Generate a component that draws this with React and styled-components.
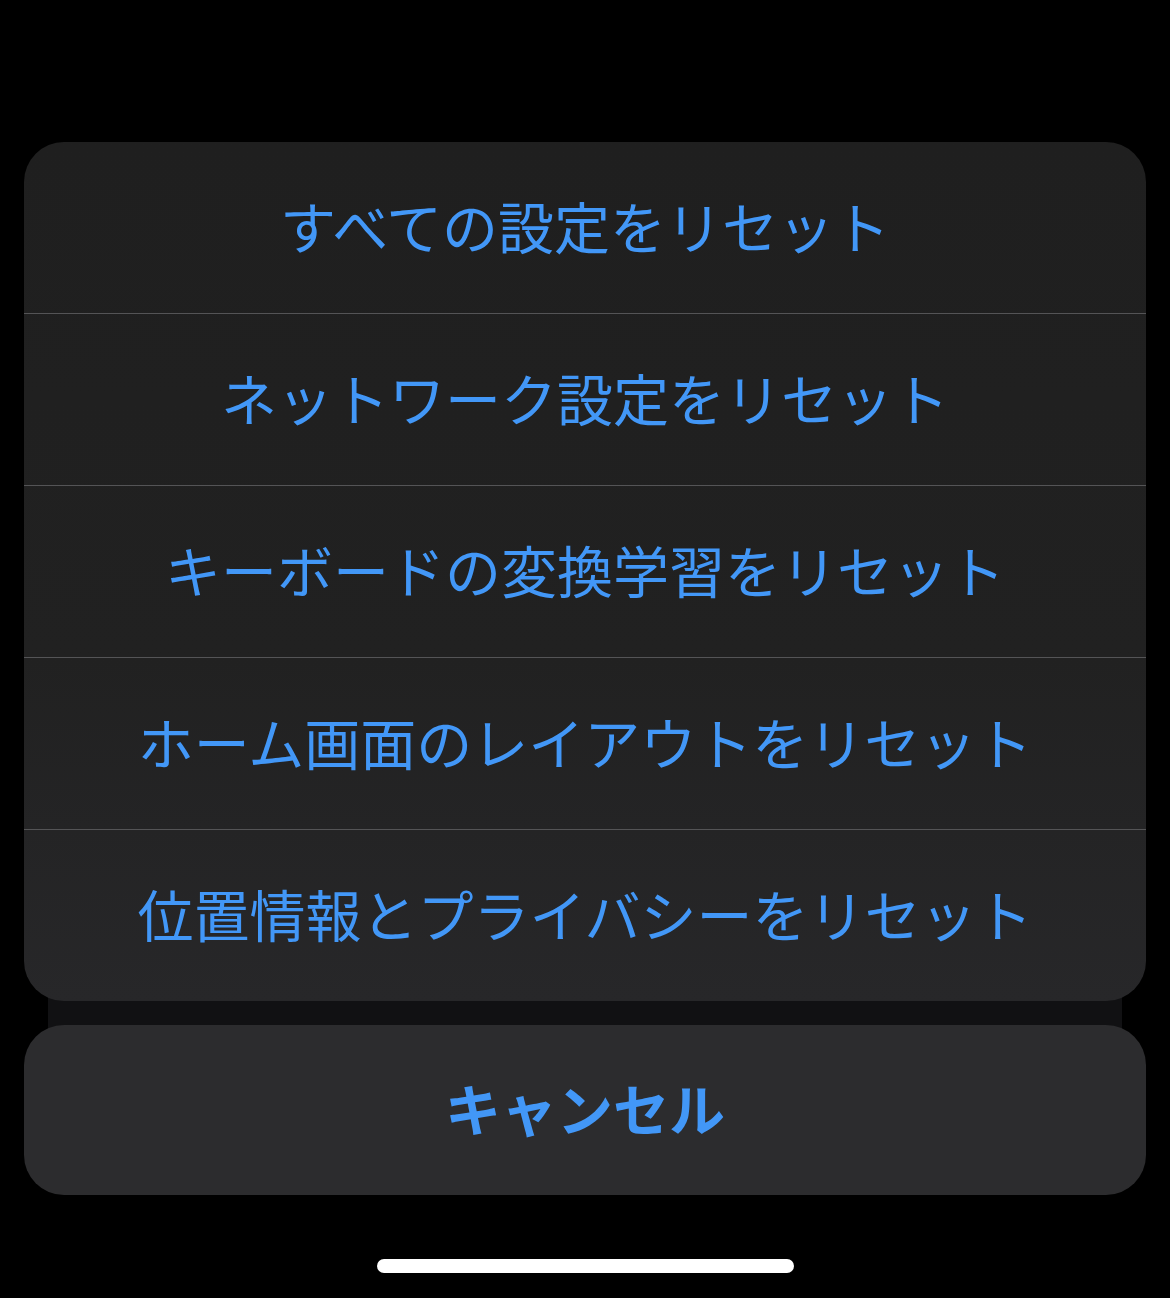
import React from 'react'
import styled, { createGlobalStyle } from 'styled-components'

const GlobalStyle = createGlobalStyle`
  html, body {
    margin: 0;
    padding: 0;
    background: #000;
  }
  body {
    font-family: "Noto Sans CJK JP", "Noto Sans", sans-serif;
  }
`

const Screen = styled.div`
  width: 1170px;
  height: 1298px;
  box-sizing: border-box;
  padding: 142px 24px 0;
  display: flex;
  flex-direction: column;
  background: #000;
`

const Sheet = styled.div`
  position: relative;
  z-index: 2;
  display: flex;
  flex-direction: column;
  border-radius: 40px;
  overflow: hidden;
  background: linear-gradient(180deg, #1f1f1f 0%, #212121 60%, #272729 100%);
`

const Action = styled.div`
  height: 171px;
  box-sizing: content-box;
  padding-bottom: 0;
  display: flex;
  align-items: center;
  justify-content: center;
  color: #4297f7;
  font-size: 56px;
  font-weight: 400;
  line-height: 1;
  border-top: ${p => (p.$first ? 'none' : '1px solid #545456')};
`

const Label = styled.span`
  margin-top: -6px;
`

const Backdrop = styled.div`
  position: relative;
  z-index: 1;
  height: 24px;
  margin: -20px 24px -20px;
  padding: 20px 0;
  background: #111113;
`

const CancelCard = styled.div`
  position: relative;
  z-index: 2;
  height: 170px;
  box-sizing: border-box;
  padding-bottom: 6px;
  border-radius: 40px;
  background: #2c2c2e;
  display: flex;
  align-items: center;
  justify-content: center;
  color: #4297f7;
  font-size: 56px;
  font-weight: 700;
  line-height: 1;
`

const HomeBar = styled.div`
  align-self: center;
  width: 417px;
  height: 14px;
  margin-top: 64px;
  border-radius: 7px;
  background: #fff;
`

const actions = [
  'すべての設定をリセット',
  'ネットワーク設定をリセット',
  'キーボードの変換学習をリセット',
  'ホーム画面のレイアウトをリセット',
  '位置情報とプライバシーをリセット',
]

export default function App() {
  return (
    <>
      <GlobalStyle />
      <Screen>
        <Sheet>
          {actions.map((label, i) => (
            <Action key={label} $first={i === 0}>
              <Label>{label}</Label>
            </Action>
          ))}
        </Sheet>
        <Backdrop />
        <CancelCard>キャンセル</CancelCard>
        <HomeBar />
      </Screen>
    </>
  )
}
